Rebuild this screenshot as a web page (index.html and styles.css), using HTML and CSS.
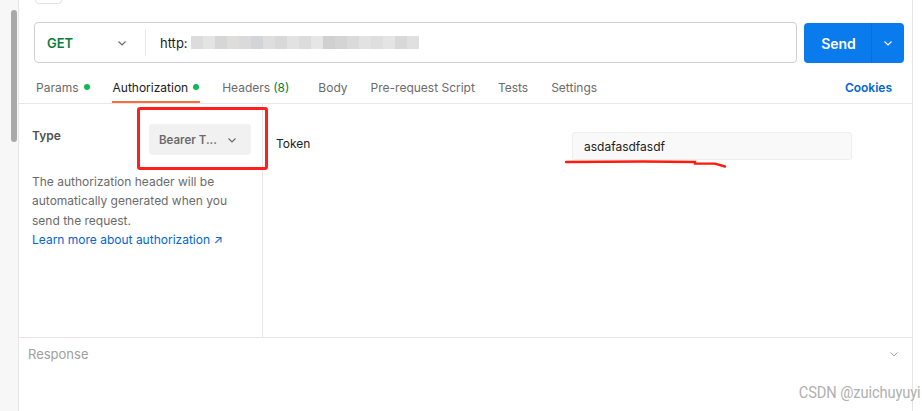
FILE: index.html
```html
<!DOCTYPE html>
<html>
<head>
<meta charset="utf-8">
<link rel="stylesheet" href="styles.css">
</head>
<body>
<div class="app">
  <div class="gutter"><div class="thumb"></div></div>
  <div class="main">
    <div class="top"><div class="stub"></div></div>
    <div class="urlrow">
      <div class="urlbox">
        <div class="method">GET
          <svg class="chev" width="12" height="12" viewBox="0 0 12 12"><path d="M2.5 4.5 L6 8 L9.5 4.5" fill="none" stroke="#6b6b6b" stroke-width="1.2"/></svg>
        </div>
        <div class="url">http:<span class="blur"><i style="background:#dcdcdc"></i><i style="background:#e4e4e4"></i><i style="background:#d6d6d6"></i><i style="background:#e0dcdc"></i><i style="background:#dadada"></i><i style="background:#d2d4d8"></i><i style="background:#dedede"></i><i style="background:#d8d8d8"></i><i style="background:#e2e2e2"></i><i style="background:#dcdcdc"></i><i style="background:#e6e6e6"></i><i style="background:#d0d0d0"></i><i style="background:#d4d4d4"></i><i style="background:#dadada"></i><i style="background:#e2e2e2"></i><i style="background:#dedede"></i><i style="background:#e4e4e4"></i><i style="background:#d8d8d8"></i><i style="background:#e0e0e0"></i></span></div>
      </div>
      <div class="send">
        <span class="sendlabel">Send</span>
        <span class="sendarrow"><svg width="12" height="12" viewBox="0 0 12 12"><path d="M2.5 4.5 L6 8 L9.5 4.5" fill="none" stroke="#ffffff" stroke-width="1.2"/></svg></span>
      </div>
    </div>
    <div class="tabs">
      <div class="tab">Params<span class="dot"></span></div>
      <div class="tab active">Authorization<span class="dot"></span></div>
      <div class="tab wide">Headers <span class="count">(8)</span></div>
      <div class="tab">Body</div>
      <div class="tab">Pre-request Script</div>
      <div class="tab">Tests</div>
      <div class="tab">Settings</div>
      <div class="spacer"></div>
      <div class="cookies">Cookies</div>
    </div>
    <div class="content">
      <div class="leftpane">
        <div class="typerow">
          <span class="typelabel">Type</span>
          <div class="select">Bearer T...
            <svg width="12" height="12" viewBox="0 0 12 12"><path d="M2.5 4.5 L6 8 L9.5 4.5" fill="none" stroke="#6b6b6b" stroke-width="1.2"/></svg>
          </div>
          <div class="redbox"></div>
        </div>
        <p class="desc">The authorization header will be automatically generated when you send the request.<br><a class="link">Learn more about authorization ↗</a></p>
      </div>
      <div class="rightpane">
        <div class="tokenrow">
          <span class="tokenlabel">Token</span>
          <div class="tokeninput">asdafasdfasdf</div>
          <svg class="scribble" width="170" height="12" viewBox="0 0 170 12"><path d="M1 3 L78 2.5 L130 3 L130 4.5 L150 4.6 L160 7.5" fill="none" stroke="#ff1a0e" stroke-width="2.4" stroke-linecap="round"/></svg>
        </div>
      </div>
    </div>
    <div class="response">
      <span>Response</span>
      <svg width="12" height="12" viewBox="0 0 12 12"><path d="M2.5 4.5 L6 8 L9.5 4.5" fill="none" stroke="#a0a0a0" stroke-width="1"/></svg>
    </div>
    <div class="watermark">CSDN @zuichuyuyi</div>
  </div>
</div>
</body>
</html>
```
FILE: styles.css
```css
* { box-sizing: border-box; }
html, body { margin: 0; padding: 0; background: #ffffff; }
body { font-family: Inter, "Noto Sans", sans-serif; font-size: 12px; color: #212121; width: 922px; height: 411px; overflow: hidden; }
.app { display: flex; height: 411px; }
.gutter { width: 19px; background: #f7f7f7; border-right: 1px solid #e6e6e6; position: relative; }
.thumb { position: absolute; left: 11px; top: 10px; width: 6px; height: 132px; background: #a9a9a9; border-radius: 3px; }
.main { width: 894px; border-right: 1px solid #e6e6e6; position: relative; display: flex; flex-direction: column; }
.top { height: 22px; padding-left: 16px; }
.stub { width: 27px; height: 4px; border: 1px solid #e4e4e4; border-top: none; border-radius: 0 0 4px 4px; }
.urlrow { display: flex; height: 41px; padding-left: 15px; }
.urlbox { width: 763px; height: 41px; border: 1px solid #cfcfcf; border-radius: 4px; display: flex; align-items: center; font-size: 13px; }
.method { width: 111px; display: flex; align-items: center; padding-left: 12px; font-weight: 600; color: #0b7c3e; border-right: 1px solid #e6e6e6; height: 26px; }
.method .chev { margin-left: auto; margin-right: 17px; }
.url { padding-left: 14px; display: flex; align-items: center; color: #212121; }
.blur { display: flex; margin-left: 3px; height: 13px; }
.blur i { width: 12px; height: 13px; display: block; }
.send { margin-left: 7px; width: 100px; height: 40px; background: #097bed; border-radius: 4px; display: flex; color: #fff; margin-top: 1px; }
.sendlabel { width: 68px; display: flex; align-items: center; justify-content: center; font-weight: 600; font-size: 14px; border-right: 1px solid #0a6ed3; padding-left: 2px; }
.sendarrow { flex: 1; display: flex; align-items: center; justify-content: center; }
.tabs { display: flex; height: 41px; border-bottom: 1px solid #e6e6e6; padding-left: 16px; padding-right: 20px; align-items: stretch; }
.tab { display: flex; align-items: center; color: #6b6b6b; margin-right: 21px; padding: 10px 1px 0; border-bottom: 2px solid transparent; }
.tab.wide { margin-right: 27px; }
.tab.active { color: #212121; border-bottom-color: #ff6c37; }
.dot { width: 6px; height: 6px; border-radius: 50%; background: #0cbb52; margin-left: 5px; }
.count { color: #0b7c3e; margin-left: 3px; }
.spacer { flex: 1; }
.cookies { display: flex; align-items: center; color: #0265d2; font-weight: 600; padding-top: 8px; }
.content { display: flex; height: 234px; border-bottom: 1px solid #e6e6e6; }
.leftpane { width: 244px; border-right: 1px solid #e6e6e6; padding-left: 13px; padding-right: 10px; }
.typerow { display: flex; height: 48px; margin-top: 20px; position: relative; align-items: flex-start; }
.typelabel { width: 117px; font-weight: 600; color: #505050; margin-top: 4px; }
.select { width: 102px; height: 31px; background: #f1f1f1; border-radius: 4px; display: flex; align-items: center; padding-left: 10px; padding-right: 13px; font-weight: 600; color: #6b6b6b; font-size: 11.5px; justify-content: space-between; }
.redbox { position: absolute; left: 105px; top: -17px; width: 131px; height: 63px; border: 3px solid #ff1f1f; border-radius: 3px; }
.desc { margin: 0; color: #6b6b6b; line-height: 19.4px; font-size: 12px; }
.link { color: #0265d2; }
.rightpane { flex: 1; padding-left: 13px; }
.tokenrow { display: flex; align-items: flex-start; margin-top: 28px; position: relative; }
.tokenlabel { width: 296px; color: #212121; margin-top: 4px; }
.tokeninput { width: 280px; height: 28px; background: #f9f9f9; border: 1px solid #ededed; border-radius: 3px; display: flex; align-items: center; padding-left: 11px; color: #212121; }
.scribble { position: absolute; left: 289px; top: 27px; }
.response { display: flex; align-items: center; justify-content: space-between; height: 32px; padding-left: 9px; padding-right: 12px; color: #a0a0a0; font-size: 13px; }
.watermark { position: absolute; right: -8px; top: 382px; font-family: "Roboto", "Liberation Sans", sans-serif; font-size: 17px; color: #b0b0b0; letter-spacing: -0.1px; transform: scaleX(0.86); transform-origin: right; }
```
